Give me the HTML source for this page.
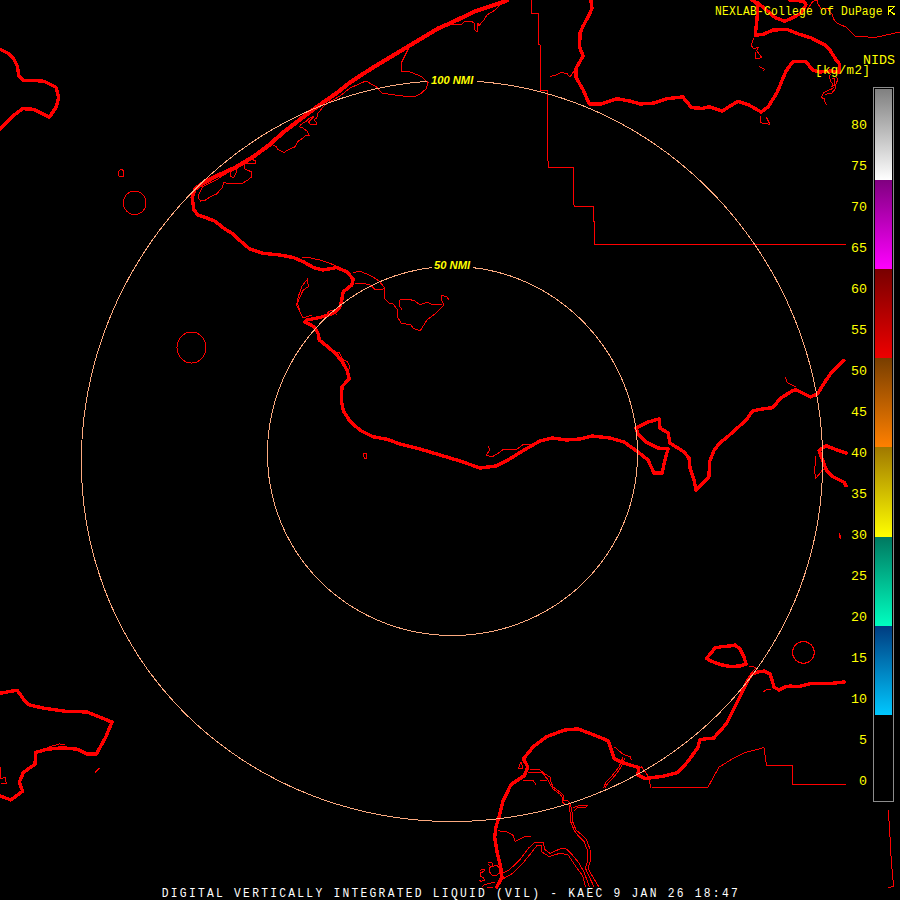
<!DOCTYPE html>
<html><head><meta charset="utf-8">
<style>
html,body{margin:0;padding:0;background:#000;width:900px;height:900px;overflow:hidden}
#c{position:absolute;left:0;top:0;width:900px;height:900px}
.t{position:absolute;font-family:"Liberation Mono",monospace;white-space:pre;line-height:1}
</style></head><body>
<svg id="c" shape-rendering="crispEdges" width="900" height="900" viewBox="0 0 900 900">
<rect width="900" height="900" fill="#000"/>
<g fill="none" stroke="#ff0000" stroke-width="1" stroke-linejoin="round">
<path d="M550,76.5 L556,75 561,72.5 567,73.5 570,77 574,71"/>
<path d="M531.5,0 V13.5 H538.5 V44 L540,45 V90.5 H547.5 V161 H548.5 V167.5 H573.5 V204 L574.5,206.5 H593.5 V221.5 H594.5 V244.5 H846"/>
<path d="M651.5,787.5 H707.8 L718.9,767.2 733,758.5 744.4,752.8 763.9,747.6 L766.5,765.5 H792.5 V784.5 H846"/>
<path d="M641.3,766.4 L647.4,775 649,780 651,787.5"/>
<path d="M505,0 L500,5 495,10 487,15 484,20 479,25.5 478,23 477,32 475,30 474,23 472,21.5 465,21 462,24 450,25 447,26 433.6,32 417.6,40.9 408.7,48 401.6,62.2 401.6,71.1 410.4,72 421.1,76.4 428.2,82.7 426,88.9 421,93.3 415.8,96 403.3,96 382,93.3 376.7,87.1 366,80.9 350,88 340,96 327.3,103.3 323.3,106.7 318,113.3 316.7,118 314,120 316.7,122.7 316,124.7 310.7,124.7 308.7,122 312.7,118 314,116.7 310.7,117.3 306,121.3 300.7,124.7 299.3,126.7 302.7,128 307.3,131.3 309.3,135.3 305.3,136 302,138.7 298,141.3 295.3,146.7 290.7,148.7 286.7,150.7 284,152.7 280.7,150.7 277.3,149.3 276.7,146.7 272.7,145.3"/>
<path d="M252.2,159.3 L255.8,161.1 255.8,163.3 248.7,163.3 244.2,164.2 245.1,169.1 251.3,171.8 251.3,177.1 246.9,180.7 242.4,183.3 232.7,183.3 223.8,182.9 222,187.8 216.7,194 210.4,196.7 205.1,200.2 200.7,201.1 198.4,198.4 198.9,194 202.4,186.9 209.6,183.3 216.7,179.8 222,176.2 226,174"/>
<path d="M230.7,172 L230,176 233.3,178 236,173.3 236,168"/>
<path d="M301.7,257.5 L308.3,257.5 320,260 330,263.3 336,266"/>
<path d="M307.5,278.3 L308.3,286.7 303.3,290 300,296.7 297.5,303.3 300,311.7 303.3,318.3"/>
<path d="M306.7,280 L301.7,286.7 298.3,296.7 296.7,305 300,312 303.3,318 311.7,315"/>
<path d="M326.7,313.3 L331.7,310 336.7,315"/>
<path d="M353,273 L359,271 367,274 373,277 379,281 384,287 384,292 385,299 389,303 393,304 397,309 397,316 401,323 411,325 413,328 420,331 427,320 436,313 440,309 444,305 441,299 441,295 447,297 449,300"/>
<path d="M442,304 L433,305 427,302 420,305 415,301 408,299 400,300 399,305 402,310"/>
<path d="M355,284 L364,283.3 370.7,285.3 374.7,289.3 380,290 384,288.7"/>
<path d="M488,446 L490,450 486,455 492,457 500,452 504,449 516,450 524,444 530,444"/>
<path d="M335,353 L339.3,352.7 343.3,360 347.3,361.3 350,367.3 348,371"/>
<path d="M749,667 L753,666.5 756,668 752,672"/>
<path d="M763,692 L767,689.5 771,689"/>
<path d="M121.5,169.5 L123.5,170.5 V176.5 H119.5 L118.5,175 V172 L120,170 Z"/>
<path d="M364,453.5 H366.5 L367,458.5 H364.5 L363.5,455 Z"/>
<path d="M807.1,9.4 L813,1.2 817.7,0"/>
<path d="M817.7,0 L817.7,3.5 821.3,9.4 827.2,8.2 831.9,14.1 834.2,20 837.8,23.6 846,27.1 855,36 875,37.5 897.5,32.5 900,32"/>
<path d="M754,38 L751.2,44.8 753,48.3 755.3,48.3 758.8,47.1 756.5,50.6 761.8,57.7 755.3,58.9 755.3,51.8"/>
<path d="M759.3,66.7 L764.7,69.3 762.9,71.1"/>
<path d="M830.4,73.6 L829.6,76.7 830.4,81.1 832.2,83.3 833.1,87.8 831.3,89.1 826.9,90.9 823.3,93.1 822,95.8 821.6,97.6 824.7,98.9 825.1,102.4 826.4,104.7"/>
<path d="M836.7,76.7 L837.6,80.2 835.8,84.2 835.3,88.7 833.6,90.9 831.3,93.6 826.9,94 824.7,95.3"/>
<path d="M832.2,78.9 L834.9,78.9 834,85.6 831.5,87"/>
<path d="M839,532.5 V537 L840.5,538 L841,536 L839,535"/>
<path d="M761.1,115.6 L760.2,122.7 770,124.4 766.4,117.3"/>
<path d="M815.6,455.6 L814.7,471.6 815.6,478.7 822.7,469.8 826,470"/>
<path d="M785.3,377.3 L787.1,382.7 796,387.1"/>
<path d="M530,769 L540,770 545,774 550,777 551,782 553,787 560,792 563,795 563,800 567,800 570,803 571,807 572,812 572,820 574,825 576,830 580,833.3 586.7,840 590,849.3 590.7,860 588,868 590.7,873.3 598.7,886.7"/>
<path d="M528,773 L532,772 542,772 548,780 550,784 553,789 560,794 562,797 562,802 565,804 569,805 570,812 570,820 572,825 574,830"/>
<path d="M573,808 L580,805 588,805 586,807 578,807 574,811"/>
<path d="M523,781 L530,780 533,780 536,785"/>
<path d="M540,780 L547,780"/>
<path d="M521,762 L518,769 523,768 521,762"/>
<path d="M574,830 L577.3,834.7 584,841.3 587.3,850 588,860 585.3,868 588,874 594,886.7"/>
<path d="M614.4,746.9 L623,754.2 630.3,756.7 631.6,760.3"/>
<path d="M623,757 L619.3,766.4 615,772 610.8,777.4 606,782 603.4,788.4"/>
<path d="M625,758 L621,767 617,773 612,779 608,783 605,788"/>
<path d="M498,830.7 L507.3,832 512.7,834.7 515.3,841.3 520.7,838.7 526,836 531.3,836.7"/>
<path d="M502.7,873.3 L510,869.3 520.7,858.7 528.7,848 535.3,842 543.3,842.7 544.7,849.3 550,853.3 562,848 566.7,849.3 573.3,856 578.7,862.7 584,872 589.3,886.7"/>
<path d="M503.3,878.7 L512.7,873.3 523.3,862.7 532.7,851 537,845.5 541.5,846 542,852 549,856.5 560,853.3 568,854.7 576,866.7 582.7,876 585.5,886.7"/>
<path d="M488.5,863 L491,862.3 492.8,863.5 492,866 489.5,866 488.5,864.5"/>
<path d="M489,868 L492,866.5 497,865 499,868 499.5,873 496,875.5 492,875 489.5,872 489,868"/>
<path d="M480,870.5 L483,869 485,870 482.5,872 480,873 480.5,876 483.5,878 484.5,880 481,881.5 479,880"/>
<path d="M481.5,887.5 L484,885 487,884 494.5,882"/>
<path d="M487,887.5 H493"/>
<path d="M46.7,747.8 L59.1,743.9 65.3,744.7"/>
<path d="M0,766.4 L0.8,778.9 5.4,777.3 6.2,783.5 1,784"/>
<path d="M94.9,772.6 L99.5,768"/>
<path d="M888.3,810 L889.3,825.3 890.4,843.3 891.3,861.3 892.4,873.3 893.3,882.7 893.3,886.7 888,887.3"/>
<ellipse cx="134.7" cy="202.8" rx="11.3" ry="11.8"/>
<ellipse cx="191.5" cy="347.5" rx="14.5" ry="15.5"/>
<ellipse cx="803.4" cy="652.4" rx="10.9" ry="10.9"/>
</g>
<path d="M507,0.5 L474.4,11.7 450,23.3 438.9,28 416.7,41.3 394.4,54.6 372.2,68 350,82.4 337.8,92.2 310,111.8 282.2,133.2 270,144.4 252.2,157.5 234.4,168 216.7,176 203.3,183 195.3,188.7" fill="none" stroke="#ff0000" stroke-width="4.1" stroke-linejoin="round" stroke-linecap="round"/>
<g fill="none" stroke="#ff0000" stroke-width="3.4" stroke-linejoin="round" stroke-linecap="round">
<path d="M0,49.3 L8,53.3 13.3,58 17.3,66 18.7,75.3 23.3,80.7 33.3,80.4 44,81.3 56,87.3 58.7,98 56,107.3 49.3,117.3 33.3,109.3 22.7,108.7 14.7,114.7 6.7,122 0,129.3"/>
<path d="M195.3,188.7 192.2,197.6 193.8,209.8 198.2,215.1 206.2,217.8 215.1,221.3 224,228.4 232.9,233.8 238.3,239.2 250,249.2 263.3,253.3 280,255 293.3,257.5 303.3,261.7 313.3,267.5 323.3,270 336.7,267.5 346.7,271.7 353.3,279.2 351.7,285 343.3,291.7 341.7,300 340,306.7 333.3,313.3 320,317.5 306.7,320 305,322 314,326.7 318,333.3 319.3,340 326,345.3 335.3,353.3 342,361.3 347.3,370.7 349.3,378.7 342,386.7 341.3,400 343.3,410.7 350,421.3 360.7,430.7 372.7,436.7 387.3,439.3 400,444 420,449 440,455 460,461 480,468 496,466 508,460 524,450 540,441 552,438 566,440 580,439 592,436 610,438 624,442 638,452 648,460 654,473 662,473 666,456 668,449 658,448 646,442 638,434 636,428 648,422 659,419 660,428 668,433 670,443 684,452 689,458 690,468 694,480 696,490 708.9,476.9 709.8,460.9 714.2,450.2 719.6,443.1 728.4,436 737.3,428 746.2,420 752.4,411.1 760.4,409.3 772.9,407.6 780,398.7 792.4,390.7 796,389.8 810.2,396.9 817.3,394.2 824.4,382.7 831.6,372 844,360.4"/>
<path d="M846,452.9 L835.1,449.3 826.2,445.8 819.1,450.2 820.9,455.6 826.2,469.8 833.3,476.9 844,482.2 846,485.8"/>
<path d="M590.7,0 L592,8 589.3,14.7 582.7,26.7 580,33.3 579.6,47.1 583.1,56 576,68.4 576,77.3 583.1,89.8 589.3,104 600.9,104 616.9,98.7 631.1,101.3 640,104 654.2,103.1 666.7,98.7 682.7,96.9 691.6,107.6 702.2,108.4 709.3,106.7 722,111.1 738,101.3 748.7,104.9 761.1,112 768.2,106.7 777.1,92.4 786,71.1 793.1,61.3 805.6,61.3 812.7,70.2 819.8,72 830.4,71.1 839.3,72 839.3,64 835.4,58.9 829.5,49.5 824.8,44.8 810.7,37.7 798.9,34.2 787.1,29.4 773,30 763.6,34.2 755.3,35.3 756.5,23.6 757.7,11.8 757.1,3.5 751.8,0"/>
<path d="M757.1,2.4 L767.1,10.6 775.3,17.7 784.8,21.2 793,17.7 801.2,13 806,4.7 803.6,1.2 789.5,0"/>
<path d="M496.7,887 L502,877.3 500.7,866.7 497.3,853.3 494.7,837.3 496,826.7 499.3,816 503,801 511.1,784.4 524.4,775.6 527.8,766.7 523.3,758.9 533.3,746.7 546.7,736.7 564.4,730 577.8,728.9 590,733.4 608.3,740.8 612,751.8 614.4,759 626.7,764 638.9,767.6 637.7,775 645,778.6 663.3,776.2 678,772.5 687.8,761.5 697.6,748 700,739.5 713.8,738 726.2,724 738.7,699.1 748,680 752,674 758,672 764,671 770,674 772,680 774,687 779,690 785,687 790,686 797.8,686.7 810.2,683.6 828.9,683.6 844.5,682"/>
<path d="M706.5,658.5 L715,648 722,646.5 730,646 735,645 740,649 744,657 746,664 740,666 730,666.5 720,664.5 711,661 Z"/>
<path d="M0,693.3 L7.8,691.8 17.1,690.2 24.9,701.1 29.5,705 43.5,708.1 65.3,711.2 87.1,712 112,722.1 105.8,736.9 96.4,754 87.1,754 77.8,749.3 62.2,747.8 46.7,749.3 35.8,752.4 35,764.1 23.3,772.6 19.4,782 22.6,791.3 10.9,799.9 0,796"/>
</g>
<g fill="none" stroke="#fcaa80" stroke-width="1"><path d="M473.1,267.7 L474.7,267.9 L476.3,268.1 L477.9,268.3 L479.4,268.5 L481.0,268.8 L482.6,269.0 L484.2,269.3 L485.7,269.6 L487.3,269.9 L488.8,270.2 L490.4,270.5 L492.0,270.9 L493.5,271.2 L495.1,271.6 L496.6,272.0 L498.1,272.4 L499.7,272.8 L501.2,273.2 L502.8,273.6 L504.3,274.1 L505.8,274.6 L507.3,275.0 L508.9,275.5 L510.4,276.0 L511.9,276.6 L513.4,277.1 L514.9,277.6 L516.4,278.2 L517.9,278.8 L519.4,279.3 L520.8,279.9 L522.3,280.5 L523.8,281.2 L525.3,281.8 L526.7,282.5 L528.2,283.1 L529.6,283.8 L531.1,284.5 L532.5,285.2 L533.9,285.9 L535.4,286.6 L536.8,287.3 L538.2,288.1 L539.6,288.9 L541.0,289.6 L542.4,290.4 L543.8,291.2 L545.2,292.0 L546.6,292.9 L547.9,293.7 L549.3,294.5 L550.6,295.4 L552.0,296.3 L553.3,297.1 L554.7,298.0 L556.0,298.9 L557.3,299.9 L558.6,300.8 L559.9,301.7 L561.2,302.7 L562.5,303.7 L563.8,304.6 L565.1,305.6 L566.3,306.6 L567.6,307.6 L568.8,308.6 L570.0,309.7 L571.3,310.7 L572.5,311.8 L573.7,312.8 L574.9,313.9 L576.1,315.0 L577.3,316.1 L578.5,317.2 L579.6,318.3 L580.8,319.4 L581.9,320.5 L583.1,321.7 L584.2,322.8 L585.3,324.0 L586.4,325.2 L587.5,326.4 L588.6,327.5 L589.7,328.7 L590.7,330.0 L591.8,331.2 L592.9,332.4 L593.9,333.6 L594.9,334.9 L595.9,336.1 L596.9,337.4 L597.9,338.7 L598.9,340.0 L599.9,341.3 L600.8,342.6 L601.8,343.9 L602.7,345.2 L603.7,346.5 L604.6,347.8 L605.5,349.2 L606.4,350.5 L607.3,351.9 L608.1,353.2 L609.0,354.6 L609.9,356.0 L610.7,357.4 L611.5,358.8 L612.3,360.1 L613.1,361.6 L613.9,363.0 L614.7,364.4 L615.5,365.8 L616.2,367.2 L617.0,368.7 L617.7,370.1 L618.4,371.6 L619.1,373.0 L619.8,374.5 L620.5,376.0 L621.1,377.4 L621.8,378.9 L622.4,380.4 L623.1,381.9 L623.7,383.4 L624.3,384.9 L624.9,386.4 L625.5,387.9 L626.0,389.4 L626.6,390.9 L627.1,392.5 L627.6,394.0 L628.1,395.5 L628.6,397.1 L629.1,398.6 L629.6,400.1 L630.1,401.7 L630.5,403.2 L630.9,404.8 L631.4,406.4 L631.8,407.9 L632.2,409.5 L632.5,411.1 L632.9,412.6 L633.2,414.2 L633.6,415.8 L633.9,417.4 L634.2,419.0 L634.5,420.5 L634.8,422.1 L635.1,423.7 L635.3,425.3 L635.6,426.9 L635.8,428.5 L636.0,430.1 L636.2,431.7 L636.4,433.3 L636.6,434.9 L636.7,436.5 L636.9,438.1 L637.0,439.7 L637.1,441.3 L637.2,443.0 L637.3,444.6 L637.4,446.2 L637.4,447.8 L637.5,449.4 L637.5,451.0 L637.5,452.6 L637.5,454.2 L637.5,455.8 L637.5,457.4 L637.4,459.0 L637.4,460.7 L637.3,462.3 L637.2,463.9 L637.1,465.5 L637.0,467.1 L636.9,468.7 L636.8,470.3 L636.6,471.9 L636.5,473.5 L636.3,475.1 L636.1,476.7 L635.9,478.3 L635.7,479.9 L635.4,481.5 L635.2,483.0 L634.9,484.6 L634.6,486.2 L634.3,487.8 L634.0,489.4 L633.7,490.9 L633.4,492.5 L633.0,494.1 L632.7,495.6 L632.3,497.2 L631.9,498.8 L631.5,500.3 L631.1,501.9 L630.6,503.4 L630.2,504.9 L629.7,506.5 L629.3,508.0 L628.8,509.5 L628.3,511.1 L627.8,512.6 L627.2,514.1 L626.7,515.6 L626.1,517.1 L625.6,518.6 L625.0,520.1 L624.4,521.6 L623.8,523.1 L623.2,524.6 L622.5,526.0 L621.9,527.5 L621.2,529.0 L620.6,530.4 L619.9,531.9 L619.2,533.3 L618.5,534.8 L617.7,536.2 L617.0,537.6 L616.2,539.0 L615.5,540.4 L614.7,541.9 L613.9,543.2 L613.1,544.6 L612.3,546.0 L611.5,547.4 L610.6,548.8 L609.8,550.1 L608.9,551.5 L608.0,552.8 L607.2,554.2 L606.3,555.5 L605.3,556.8 L604.4,558.1 L603.5,559.4 L602.5,560.7 L601.6,562.0 L600.6,563.3 L599.6,564.6 L598.6,565.9 L597.6,567.1 L596.6,568.4 L595.6,569.6 L594.5,570.8 L593.5,572.0 L592.4,573.3 L591.4,574.5 L590.3,575.6 L589.2,576.8 L588.1,578.0 L587.0,579.2 L585.8,580.3 L584.7,581.5 L583.6,582.6 L582.4,583.7 L581.2,584.8 L580.1,585.9 L578.9,587.0 L577.7,588.1 L576.5,589.2 L575.2,590.2 L574.0,591.3 L572.8,592.3 L571.5,593.4 L570.3,594.4 L569.0,595.4 L567.7,596.4 L566.5,597.4 L565.2,598.3 L563.9,599.3 L562.6,600.3 L561.2,601.2 L559.9,602.1 L558.6,603.1 L557.2,604.0 L555.9,604.9 L554.5,605.7 L553.2,606.6 L551.8,607.5 L550.4,608.3 L549.0,609.1 L547.6,610.0 L546.2,610.8 L544.8,611.6 L543.4,612.4 L541.9,613.1 L540.5,613.9 L539.1,614.7 L537.6,615.4 L536.2,616.1 L534.7,616.8 L533.2,617.5 L531.7,618.2 L530.3,618.9 L528.8,619.5 L527.3,620.2 L525.8,620.8 L524.3,621.5 L522.8,622.1 L521.2,622.7 L519.7,623.2 L518.2,623.8 L516.7,624.4 L515.1,624.9 L513.6,625.4 L512.0,626.0 L510.5,626.5 L508.9,627.0 L507.4,627.4 L505.8,627.9 L504.2,628.4 L502.7,628.8 L501.1,629.2 L499.5,629.6 L497.9,630.0 L496.3,630.4 L494.7,630.8 L493.1,631.1 L491.5,631.5 L489.9,631.8 L488.3,632.1 L486.7,632.4 L485.1,632.7 L483.5,633.0 L481.9,633.2 L480.3,633.5 L478.6,633.7 L477.0,633.9 L475.4,634.1 L473.8,634.3 L472.1,634.5 L470.5,634.7 L468.9,634.8 L467.2,634.9 L465.6,635.1 L464.0,635.2 L462.3,635.2 L460.7,635.3 L459.1,635.4 L457.4,635.4 L455.8,635.5 L454.1,635.5 L452.5,635.5 L450.9,635.5 L449.2,635.5 L447.6,635.4 L445.9,635.4 L444.3,635.3 L442.7,635.2 L441.0,635.2 L439.4,635.1 L437.8,634.9 L436.1,634.8 L434.5,634.7 L432.9,634.5 L431.2,634.3 L429.6,634.1 L428.0,633.9 L426.4,633.7 L424.7,633.5 L423.1,633.2 L421.5,633.0 L419.9,632.7 L418.3,632.4 L416.7,632.1 L415.1,631.8 L413.5,631.5 L411.9,631.1 L410.3,630.8 L408.7,630.4 L407.1,630.0 L405.5,629.6 L403.9,629.2 L402.3,628.8 L400.8,628.4 L399.2,627.9 L397.6,627.4 L396.1,627.0 L394.5,626.5 L393.0,626.0 L391.4,625.4 L389.9,624.9 L388.3,624.4 L386.8,623.8 L385.3,623.2 L383.8,622.7 L382.2,622.1 L380.7,621.5 L379.2,620.8 L377.7,620.2 L376.2,619.5 L374.7,618.9 L373.3,618.2 L371.8,617.5 L370.3,616.8 L368.8,616.1 L367.4,615.4 L365.9,614.7 L364.5,613.9 L363.1,613.1 L361.6,612.4 L360.2,611.6 L358.8,610.8 L357.4,610.0 L356.0,609.1 L354.6,608.3 L353.2,607.5 L351.8,606.6 L350.5,605.7 L349.1,604.9 L347.8,604.0 L346.4,603.1 L345.1,602.1 L343.8,601.2 L342.4,600.3 L341.1,599.3 L339.8,598.3 L338.5,597.4 L337.3,596.4 L336.0,595.4 L334.7,594.4 L333.5,593.4 L332.2,592.3 L331.0,591.3 L329.8,590.2 L328.5,589.2 L327.3,588.1 L326.1,587.0 L324.9,585.9 L323.8,584.8 L322.6,583.7 L321.4,582.6 L320.3,581.5 L319.2,580.3 L318.0,579.2 L316.9,578.0 L315.8,576.8 L314.7,575.6 L313.6,574.5 L312.6,573.3 L311.5,572.0 L310.5,570.8 L309.4,569.6 L308.4,568.4 L307.4,567.1 L306.4,565.9 L305.4,564.6 L304.4,563.3 L303.4,562.0 L302.5,560.7 L301.5,559.4 L300.6,558.1 L299.7,556.8 L298.7,555.5 L297.8,554.2 L297.0,552.8 L296.1,551.5 L295.2,550.1 L294.4,548.8 L293.5,547.4 L292.7,546.0 L291.9,544.6 L291.1,543.3 L290.3,541.9 L289.5,540.4 L288.8,539.0 L288.0,537.6 L287.3,536.2 L286.5,534.8 L285.8,533.3 L285.1,531.9 L284.4,530.4 L283.8,529.0 L283.1,527.5 L282.5,526.0 L281.8,524.6 L281.2,523.1 L280.6,521.6 L280.0,520.1 L279.4,518.6 L278.9,517.1 L278.3,515.6 L277.8,514.1 L277.2,512.6 L276.7,511.1 L276.2,509.5 L275.7,508.0 L275.3,506.5 L274.8,504.9 L274.4,503.4 L273.9,501.9 L273.5,500.3 L273.1,498.8 L272.7,497.2 L272.3,495.6 L272.0,494.1 L271.6,492.5 L271.3,490.9 L271.0,489.4 L270.7,487.8 L270.4,486.2 L270.1,484.6 L269.8,483.0 L269.6,481.5 L269.3,479.9 L269.1,478.3 L268.9,476.7 L268.7,475.1 L268.5,473.5 L268.4,471.9 L268.2,470.3 L268.1,468.7 L268.0,467.1 L267.9,465.5 L267.8,463.9 L267.7,462.3 L267.6,460.7 L267.6,459.0 L267.5,457.4 L267.5,455.8 L267.5,454.2 L267.5,452.6 L267.5,451.0 L267.5,449.4 L267.6,447.8 L267.6,446.2 L267.7,444.6 L267.8,443.0 L267.9,441.3 L268.0,439.7 L268.1,438.1 L268.3,436.5 L268.4,434.9 L268.6,433.3 L268.8,431.7 L269.0,430.1 L269.2,428.5 L269.4,426.9 L269.7,425.3 L269.9,423.7 L270.2,422.1 L270.5,420.5 L270.8,419.0 L271.1,417.4 L271.4,415.8 L271.8,414.2 L272.1,412.6 L272.5,411.1 L272.8,409.5 L273.2,407.9 L273.6,406.4 L274.1,404.8 L274.5,403.2 L274.9,401.7 L275.4,400.1 L275.9,398.6 L276.4,397.1 L276.9,395.5 L277.4,394.0 L277.9,392.5 L278.4,390.9 L279.0,389.4 L279.5,387.9 L280.1,386.4 L280.7,384.9 L281.3,383.4 L281.9,381.9 L282.6,380.4 L283.2,378.9 L283.9,377.4 L284.5,376.0 L285.2,374.5 L285.9,373.0 L286.6,371.6 L287.3,370.1 L288.0,368.7 L288.8,367.2 L289.5,365.8 L290.3,364.4 L291.1,363.0 L291.9,361.6 L292.7,360.1 L293.5,358.8 L294.3,357.4 L295.1,356.0 L296.0,354.6 L296.9,353.2 L297.7,351.9 L298.6,350.5 L299.5,349.2 L300.4,347.8 L301.3,346.5 L302.3,345.2 L303.2,343.9 L304.2,342.6 L305.1,341.3 L306.1,340.0 L307.1,338.7 L308.1,337.4 L309.1,336.1 L310.1,334.9 L311.1,333.6 L312.1,332.4 L313.2,331.2 L314.3,330.0 L315.3,328.7 L316.4,327.5 L317.5,326.4 L318.6,325.2 L319.7,324.0 L320.8,322.8 L321.9,321.7 L323.1,320.5 L324.2,319.4 L325.4,318.3 L326.5,317.2 L327.7,316.1 L328.9,315.0 L330.1,313.9 L331.3,312.8 L332.5,311.8 L333.7,310.7 L335.0,309.7 L336.2,308.6 L337.4,307.6 L338.7,306.6 L339.9,305.6 L341.2,304.6 L342.5,303.7 L343.8,302.7 L345.1,301.7 L346.4,300.8 L347.7,299.9 L349.0,298.9 L350.3,298.0 L351.7,297.1 L353.0,296.3 L354.4,295.4 L355.7,294.5 L357.1,293.7 L358.4,292.9 L359.8,292.0 L361.2,291.2 L362.6,290.4 L364.0,289.6 L365.4,288.9 L366.8,288.1 L368.2,287.3 L369.6,286.6 L371.1,285.9 L372.5,285.2 L373.9,284.5 L375.4,283.8 L376.8,283.1 L378.3,282.5 L379.7,281.8 L381.2,281.2 L382.7,280.5 L384.2,279.9 L385.6,279.3 L387.1,278.8 L388.6,278.2 L390.1,277.6 L391.6,277.1 L393.1,276.6 L394.6,276.0 L396.1,275.5 L397.7,275.0 L399.2,274.6 L400.7,274.1 L402.2,273.6 L403.8,273.2 L405.3,272.8 L406.9,272.4 L408.4,272.0 L409.9,271.6 L411.5,271.2 L413.0,270.9 L414.6,270.5 L416.2,270.2 L417.7,269.9 L419.3,269.6 L420.8,269.3 L422.4,269.0 L424.0,268.8 L425.6,268.5 L427.1,268.3 L428.7,268.1 L430.3,267.9 L431.9,267.7"/><path d="M477.1,81.4 L478.7,81.5 L480.2,81.6 L481.8,81.8 L483.4,81.9 L484.9,82.1 L486.5,82.2 L488.0,82.4 L489.6,82.5 L491.2,82.7 L492.7,82.9 L494.3,83.1 L495.9,83.3 L497.4,83.5 L499.0,83.7 L500.5,83.9 L502.1,84.1 L503.6,84.3 L505.2,84.6 L506.7,84.8 L508.3,85.1 L509.9,85.3 L511.4,85.6 L513.0,85.9 L514.5,86.1 L516.0,86.4 L517.6,86.7 L519.1,87.0 L520.7,87.3 L522.2,87.6 L523.8,87.9 L525.3,88.3 L526.8,88.6 L528.4,88.9 L529.9,89.3 L531.5,89.6 L533.0,90.0 L534.5,90.4 L536.1,90.7 L537.6,91.1 L539.1,91.5 L540.6,91.9 L542.2,92.3 L543.7,92.7 L545.2,93.1 L546.7,93.5 L548.2,94.0 L549.8,94.4 L551.3,94.9 L552.8,95.3 L554.3,95.8 L555.8,96.2 L557.3,96.7 L558.8,97.2 L560.3,97.6 L561.8,98.1 L563.3,98.6 L564.8,99.1 L566.3,99.6 L567.8,100.2 L569.3,100.7 L570.8,101.2 L572.3,101.8 L573.8,102.3 L575.3,102.8 L576.7,103.4 L578.2,104.0 L579.7,104.5 L581.2,105.1 L582.7,105.7 L584.1,106.3 L585.6,106.9 L587.1,107.5 L588.5,108.1 L590.0,108.7 L591.4,109.3 L592.9,110.0 L594.4,110.6 L595.8,111.2 L597.3,111.9 L598.7,112.5 L600.1,113.2 L601.6,113.9 L603.0,114.5 L604.5,115.2 L605.9,115.9 L607.3,116.6 L608.8,117.3 L610.2,118.0 L611.6,118.7 L613.0,119.4 L614.4,120.2 L615.9,120.9 L617.3,121.6 L618.7,122.4 L620.1,123.1 L621.5,123.9 L622.9,124.6 L624.3,125.4 L625.7,126.2 L627.1,127.0 L628.5,127.7 L629.8,128.5 L631.2,129.3 L632.6,130.1 L634.0,130.9 L635.3,131.8 L636.7,132.6 L638.1,133.4 L639.4,134.3 L640.8,135.1 L642.2,135.9 L643.5,136.8 L644.9,137.7 L646.2,138.5 L647.5,139.4 L648.9,140.3 L650.2,141.2 L651.5,142.0 L652.9,142.9 L654.2,143.8 L655.5,144.7 L656.8,145.7 L658.2,146.6 L659.5,147.5 L660.8,148.4 L662.1,149.4 L663.4,150.3 L664.7,151.3 L666.0,152.2 L667.2,153.2 L668.5,154.1 L669.8,155.1 L671.1,156.1 L672.4,157.1 L673.6,158.0 L674.9,159.0 L676.2,160.0 L677.4,161.0 L678.7,162.1 L679.9,163.1 L681.2,164.1 L682.4,165.1 L683.6,166.1 L684.9,167.2 L686.1,168.2 L687.3,169.3 L688.5,170.3 L689.7,171.4 L691.0,172.4 L692.2,173.5 L693.4,174.6 L694.6,175.7 L695.8,176.7 L697.0,177.8 L698.1,178.9 L699.3,180.0 L700.5,181.1 L701.7,182.2 L702.8,183.4 L704.0,184.5 L705.2,185.6 L706.3,186.7 L707.5,187.9 L708.6,189.0 L709.8,190.2 L710.9,191.3 L712.0,192.5 L713.1,193.6 L714.3,194.8 L715.4,196.0 L716.5,197.1 L717.6,198.3 L718.7,199.5 L719.8,200.7 L720.9,201.9 L722.0,203.1 L723.1,204.3 L724.2,205.5 L725.2,206.7 L726.3,207.9 L727.4,209.2 L728.4,210.4 L729.5,211.6 L730.5,212.8 L731.6,214.1 L732.6,215.3 L733.6,216.6 L734.7,217.8 L735.7,219.1 L736.7,220.4 L737.7,221.6 L738.7,222.9 L739.7,224.2 L740.7,225.5 L741.7,226.7 L742.7,228.0 L743.7,229.3 L744.7,230.6 L745.7,231.9 L746.6,233.2 L747.6,234.5 L748.6,235.8 L749.5,237.2 L750.4,238.5 L751.4,239.8 L752.3,241.1 L753.3,242.5 L754.2,243.8 L755.1,245.2 L756.0,246.5 L756.9,247.9 L757.8,249.2 L758.7,250.6 L759.6,251.9 L760.5,253.3 L761.4,254.7 L762.2,256.0 L763.1,257.4 L764.0,258.8 L764.8,260.2 L765.7,261.6 L766.5,263.0 L767.4,264.4 L768.2,265.8 L769.0,267.2 L769.9,268.6 L770.7,270.0 L771.5,271.4 L772.3,272.8 L773.1,274.2 L773.9,275.6 L774.7,277.1 L775.5,278.5 L776.2,279.9 L777.0,281.4 L777.8,282.8 L778.5,284.2 L779.3,285.7 L780.0,287.1 L780.8,288.6 L781.5,290.0 L782.2,291.5 L783.0,293.0 L783.7,294.4 L784.4,295.9 L785.1,297.4 L785.8,298.8 L786.5,300.3 L787.2,301.8 L787.8,303.3 L788.5,304.7 L789.2,306.2 L789.8,307.7 L790.5,309.2 L791.1,310.7 L791.8,312.2 L792.4,313.7 L793.1,315.2 L793.7,316.7 L794.3,318.2 L794.9,319.7 L795.5,321.2 L796.1,322.8 L796.7,324.3 L797.3,325.8 L797.9,327.3 L798.4,328.8 L799.0,330.4 L799.6,331.9 L800.1,333.4 L800.7,335.0 L801.2,336.5 L801.7,338.0 L802.3,339.6 L802.8,341.1 L803.3,342.7 L803.8,344.2 L804.3,345.8 L804.8,347.3 L805.3,348.9 L805.8,350.4 L806.3,352.0 L806.7,353.5 L807.2,355.1 L807.6,356.7 L808.1,358.2 L808.5,359.8 L809.0,361.4 L809.4,362.9 L809.8,364.5 L810.2,366.1 L810.6,367.7 L811.1,369.2 L811.4,370.8 L811.8,372.4 L812.2,374.0 L812.6,375.6 L813.0,377.1 L813.3,378.7 L813.7,380.3 L814.0,381.9 L814.4,383.5 L814.7,385.1 L815.0,386.7 L815.4,388.3 L815.7,389.8 L816.0,391.4 L816.3,393.0 L816.6,394.6 L816.9,396.2 L817.1,397.8 L817.4,399.4 L817.7,401.0 L817.9,402.6 L818.2,404.2 L818.4,405.8 L818.7,407.5 L818.9,409.1 L819.1,410.7 L819.4,412.3 L819.6,413.9 L819.8,415.5 L820.0,417.1 L820.2,418.7 L820.3,420.3 L820.5,421.9 L820.7,423.5 L820.8,425.2 L821.0,426.8 L821.2,428.4 L821.3,430.0 L821.4,431.6 L821.6,433.2 L821.7,434.8 L821.8,436.5 L821.9,438.1 L822.0,439.7 L822.1,441.3 L822.2,442.9 L822.3,444.5 L822.3,446.2 L822.4,447.8 L822.4,449.4 L822.5,451.0 L822.5,452.6 L822.6,454.2 L822.6,455.8 L822.6,457.5 L822.6,459.1 L822.7,460.7 L822.7,462.3 L822.6,463.9 L822.6,465.5 L822.6,467.2 L822.6,468.8 L822.6,470.4 L822.5,472.0 L822.5,473.6 L822.4,475.2 L822.3,476.8 L822.3,478.5 L822.2,480.1 L822.1,481.7 L822.0,483.3 L821.9,484.9 L821.8,486.5 L821.7,488.1 L821.6,489.7 L821.5,491.3 L821.3,492.9 L821.2,494.5 L821.0,496.2 L820.9,497.8 L820.7,499.4 L820.6,501.0 L820.4,502.6 L820.2,504.2 L820.0,505.8 L819.8,507.4 L819.6,509.0 L819.4,510.6 L819.2,512.2 L818.9,513.7 L818.7,515.3 L818.5,516.9 L818.2,518.5 L818.0,520.1 L817.7,521.7 L817.4,523.3 L817.2,524.9 L816.9,526.4 L816.6,528.0 L816.3,529.6 L816.0,531.2 L815.7,532.8 L815.4,534.3 L815.0,535.9 L814.7,537.5 L814.4,539.1 L814.0,540.6 L813.7,542.2 L813.3,543.8 L812.9,545.3 L812.6,546.9 L812.2,548.5 L811.8,550.0 L811.4,551.6 L811.0,553.1 L810.6,554.7 L810.2,556.2 L809.7,557.8 L809.3,559.3 L808.9,560.9 L808.4,562.4 L808.0,564.0 L807.5,565.5 L807.1,567.0 L806.6,568.6 L806.1,570.1 L805.6,571.6 L805.1,573.2 L804.6,574.7 L804.1,576.2 L803.6,577.7 L803.1,579.2 L802.6,580.8 L802.0,582.3 L801.5,583.8 L800.9,585.3 L800.4,586.8 L799.8,588.3 L799.3,589.8 L798.7,591.3 L798.1,592.8 L797.5,594.3 L796.9,595.8 L796.3,597.3 L795.7,598.7 L795.1,600.2 L794.5,601.7 L793.8,603.2 L793.2,604.6 L792.6,606.1 L791.9,607.6 L791.2,609.0 L790.6,610.5 L789.9,612.0 L789.2,613.4 L788.6,614.9 L787.9,616.3 L787.2,617.8 L786.5,619.2 L785.8,620.6 L785.0,622.1 L784.3,623.5 L783.6,624.9 L782.8,626.4 L782.1,627.8 L781.4,629.2 L780.6,630.6 L779.8,632.0 L779.1,633.4 L778.3,634.8 L777.5,636.2 L776.7,637.6 L775.9,639.0 L775.1,640.4 L774.3,641.8 L773.5,643.2 L772.7,644.6 L771.9,646.0 L771.0,647.3 L770.2,648.7 L769.3,650.1 L768.5,651.4 L767.6,652.8 L766.8,654.1 L765.9,655.5 L765.0,656.8 L764.1,658.2 L763.2,659.5 L762.4,660.9 L761.5,662.2 L760.5,663.5 L759.6,664.8 L758.7,666.2 L757.8,667.5 L756.9,668.8 L755.9,670.1 L755.0,671.4 L754.0,672.7 L753.1,674.0 L752.1,675.3 L751.1,676.5 L750.2,677.8 L749.2,679.1 L748.2,680.4 L747.2,681.6 L746.2,682.9 L745.2,684.2 L744.2,685.4 L743.2,686.7 L742.1,687.9 L741.1,689.2 L740.1,690.4 L739.0,691.6 L738.0,692.8 L736.9,694.1 L735.9,695.3 L734.8,696.5 L733.8,697.7 L732.7,698.9 L731.6,700.1 L730.5,701.3 L729.4,702.5 L728.3,703.7 L727.2,704.9 L726.1,706.0 L725.0,707.2 L723.9,708.4 L722.8,709.5 L721.6,710.7 L720.5,711.8 L719.4,713.0 L718.2,714.1 L717.1,715.3 L715.9,716.4 L714.7,717.5 L713.6,718.6 L712.4,719.8 L711.2,720.9 L710.0,722.0 L708.9,723.1 L707.7,724.2 L706.5,725.3 L705.3,726.3 L704.0,727.4 L702.8,728.5 L701.6,729.6 L700.4,730.6 L699.2,731.7 L697.9,732.7 L696.7,733.8 L695.4,734.8 L694.2,735.9 L692.9,736.9 L691.7,737.9 L690.4,738.9 L689.1,739.9 L687.9,741.0 L686.6,742.0 L685.3,743.0 L684.0,744.0 L682.7,744.9 L681.4,745.9 L680.1,746.9 L678.8,747.9 L677.5,748.8 L676.2,749.8 L674.9,750.7 L673.6,751.7 L672.2,752.6 L670.9,753.6 L669.6,754.5 L668.2,755.4 L666.9,756.3 L665.5,757.3 L664.2,758.2 L662.8,759.1 L661.4,760.0 L660.1,760.8 L658.7,761.7 L657.3,762.6 L655.9,763.5 L654.6,764.3 L653.2,765.2 L651.8,766.1 L650.4,766.9 L649.0,767.7 L647.6,768.6 L646.2,769.4 L644.7,770.2 L643.3,771.1 L641.9,771.9 L640.5,772.7 L639.0,773.5 L637.6,774.3 L636.2,775.0 L634.7,775.8 L633.3,776.6 L631.8,777.4 L630.4,778.1 L628.9,778.9 L627.5,779.6 L626.0,780.4 L624.5,781.1 L623.1,781.8 L621.6,782.6 L620.1,783.3 L618.6,784.0 L617.2,784.7 L615.7,785.4 L614.2,786.1 L612.7,786.8 L611.2,787.5 L609.7,788.1 L608.2,788.8 L606.7,789.5 L605.2,790.1 L603.7,790.8 L602.1,791.4 L600.6,792.0 L599.1,792.7 L597.6,793.3 L596.1,793.9 L594.5,794.5 L593.0,795.1 L591.5,795.7 L589.9,796.3 L588.4,796.9 L586.8,797.5 L585.3,798.0 L583.7,798.6 L582.2,799.2 L580.6,799.7 L579.1,800.2 L577.5,800.8 L575.9,801.3 L574.4,801.8 L572.8,802.4 L571.2,802.9 L569.6,803.4 L568.1,803.9 L566.5,804.4 L564.9,804.8 L563.3,805.3 L561.7,805.8 L560.2,806.2 L558.6,806.7 L557.0,807.1 L555.4,807.6 L553.8,808.0 L552.2,808.5 L550.6,808.9 L549.0,809.3 L547.4,809.7 L545.8,810.1 L544.2,810.5 L542.5,810.9 L540.9,811.3 L539.3,811.6 L537.7,812.0 L536.1,812.4 L534.5,812.7 L532.8,813.1 L531.2,813.4 L529.6,813.7 L528.0,814.1 L526.3,814.4 L524.7,814.7 L523.1,815.0 L521.4,815.3 L519.8,815.6 L518.2,815.9 L516.5,816.1 L514.9,816.4 L513.3,816.7 L511.6,816.9 L510.0,817.2 L508.3,817.4 L506.7,817.7 L505.0,817.9 L503.4,818.1 L501.8,818.3 L500.1,818.5 L498.5,818.7 L496.8,818.9 L495.2,819.1 L493.5,819.3 L491.8,819.5 L490.2,819.6 L488.5,819.8 L486.9,819.9 L485.2,820.1 L483.6,820.2 L481.9,820.4 L480.3,820.5 L478.6,820.6 L476.9,820.7 L475.3,820.8 L473.6,820.9 L472.0,821.0 L470.3,821.1 L468.6,821.1 L467.0,821.2 L465.3,821.3 L463.6,821.3 L462.0,821.4 L460.3,821.4 L458.7,821.4 L457.0,821.5 L455.3,821.5 L453.7,821.5 L452.0,821.5 L450.3,821.5 L448.7,821.5 L447.0,821.5 L445.3,821.4 L443.7,821.4 L442.0,821.4 L440.4,821.3 L438.7,821.3 L437.0,821.2 L435.4,821.1 L433.7,821.1 L432.0,821.0 L430.4,820.9 L428.7,820.8 L427.1,820.7 L425.4,820.6 L423.7,820.5 L422.1,820.4 L420.4,820.2 L418.8,820.1 L417.1,819.9 L415.5,819.8 L413.8,819.6 L412.2,819.5 L410.5,819.3 L408.8,819.1 L407.2,818.9 L405.5,818.7 L403.9,818.5 L402.2,818.3 L400.6,818.1 L399.0,817.9 L397.3,817.7 L395.7,817.4 L394.0,817.2 L392.4,816.9 L390.7,816.7 L389.1,816.4 L387.5,816.1 L385.8,815.9 L384.2,815.6 L382.6,815.3 L380.9,815.0 L379.3,814.7 L377.7,814.4 L376.0,814.1 L374.4,813.7 L372.8,813.4 L371.2,813.1 L369.5,812.7 L367.9,812.4 L366.3,812.0 L364.7,811.6 L363.1,811.3 L361.5,810.9 L359.8,810.5 L358.2,810.1 L356.6,809.7 L355.0,809.3 L353.4,808.9 L351.8,808.5 L350.2,808.0 L348.6,807.6 L347.0,807.1 L345.4,806.7 L343.8,806.2 L342.3,805.8 L340.7,805.3 L339.1,804.8 L337.5,804.4 L335.9,803.9 L334.4,803.4 L332.8,802.9 L331.2,802.4 L329.6,801.8 L328.1,801.3 L326.5,800.8 L324.9,800.2 L323.4,799.7 L321.8,799.2 L320.3,798.6 L318.7,798.0 L317.2,797.5 L315.6,796.9 L314.1,796.3 L312.5,795.7 L311.0,795.1 L309.5,794.5 L307.9,793.9 L306.4,793.3 L304.9,792.7 L303.4,792.0 L301.9,791.4 L300.3,790.8 L298.8,790.1 L297.3,789.5 L295.8,788.8 L294.3,788.1 L292.8,787.5 L291.3,786.8 L289.8,786.1 L288.3,785.4 L286.8,784.7 L285.4,784.0 L283.9,783.3 L282.4,782.6 L280.9,781.8 L279.5,781.1 L278.0,780.4 L276.5,779.6 L275.1,778.9 L273.6,778.1 L272.2,777.4 L270.7,776.6 L269.3,775.8 L267.8,775.0 L266.4,774.3 L265.0,773.5 L263.5,772.7 L262.1,771.9 L260.7,771.1 L259.3,770.2 L257.8,769.4 L256.4,768.6 L255.0,767.7 L253.6,766.9 L252.2,766.1 L250.8,765.2 L249.4,764.3 L248.1,763.5 L246.7,762.6 L245.3,761.7 L243.9,760.8 L242.6,760.0 L241.2,759.1 L239.8,758.2 L238.5,757.3 L237.1,756.3 L235.8,755.4 L234.4,754.5 L233.1,753.6 L231.8,752.6 L230.4,751.7 L229.1,750.7 L227.8,749.8 L226.5,748.8 L225.2,747.9 L223.9,746.9 L222.6,745.9 L221.3,744.9 L220.0,744.0 L218.7,743.0 L217.4,742.0 L216.1,741.0 L214.9,739.9 L213.6,738.9 L212.3,737.9 L211.1,736.9 L209.8,735.9 L208.6,734.8 L207.3,733.8 L206.1,732.7 L204.8,731.7 L203.6,730.6 L202.4,729.6 L201.2,728.5 L200.0,727.4 L198.7,726.3 L197.5,725.3 L196.3,724.2 L195.1,723.1 L194.0,722.0 L192.8,720.9 L191.6,719.8 L190.4,718.6 L189.3,717.5 L188.1,716.4 L186.9,715.3 L185.8,714.1 L184.6,713.0 L183.5,711.8 L182.4,710.7 L181.2,709.5 L180.1,708.4 L179.0,707.2 L177.9,706.0 L176.8,704.9 L175.7,703.7 L174.6,702.5 L173.5,701.3 L172.4,700.1 L171.3,698.9 L170.2,697.7 L169.2,696.5 L168.1,695.3 L167.1,694.1 L166.0,692.8 L165.0,691.6 L163.9,690.4 L162.9,689.2 L161.9,687.9 L160.8,686.7 L159.8,685.4 L158.8,684.2 L157.8,682.9 L156.8,681.6 L155.8,680.4 L154.8,679.1 L153.8,677.8 L152.9,676.5 L151.9,675.3 L150.9,674.0 L150.0,672.7 L149.0,671.4 L148.1,670.1 L147.1,668.8 L146.2,667.5 L145.3,666.2 L144.4,664.8 L143.5,663.5 L142.5,662.2 L141.6,660.9 L140.8,659.5 L139.9,658.2 L139.0,656.8 L138.1,655.5 L137.2,654.1 L136.4,652.8 L135.5,651.4 L134.7,650.1 L133.8,648.7 L133.0,647.3 L132.1,646.0 L131.3,644.6 L130.5,643.2 L129.7,641.8 L128.9,640.4 L128.1,639.0 L127.3,637.6 L126.5,636.3 L125.7,634.8 L124.9,633.4 L124.2,632.0 L123.4,630.6 L122.6,629.2 L121.9,627.8 L121.2,626.4 L120.4,624.9 L119.7,623.5 L119.0,622.1 L118.2,620.6 L117.5,619.2 L116.8,617.8 L116.1,616.3 L115.4,614.9 L114.8,613.4 L114.1,612.0 L113.4,610.5 L112.8,609.0 L112.1,607.6 L111.4,606.1 L110.8,604.6 L110.2,603.2 L109.5,601.7 L108.9,600.2 L108.3,598.7 L107.7,597.3 L107.1,595.8 L106.5,594.3 L105.9,592.8 L105.3,591.3 L104.7,589.8 L104.2,588.3 L103.6,586.8 L103.1,585.3 L102.5,583.8 L102.0,582.3 L101.4,580.8 L100.9,579.2 L100.4,577.7 L99.9,576.2 L99.4,574.7 L98.9,573.2 L98.4,571.6 L97.9,570.1 L97.4,568.6 L96.9,567.0 L96.5,565.5 L96.0,564.0 L95.6,562.4 L95.1,560.9 L94.7,559.3 L94.3,557.8 L93.8,556.2 L93.4,554.7 L93.0,553.1 L92.6,551.6 L92.2,550.0 L91.8,548.5 L91.4,546.9 L91.1,545.3 L90.7,543.8 L90.3,542.2 L90.0,540.6 L89.6,539.1 L89.3,537.5 L89.0,535.9 L88.6,534.3 L88.3,532.8 L88.0,531.2 L87.7,529.6 L87.4,528.0 L87.1,526.4 L86.8,524.9 L86.6,523.3 L86.3,521.7 L86.0,520.1 L85.8,518.5 L85.5,516.9 L85.3,515.3 L85.1,513.7 L84.8,512.2 L84.6,510.6 L84.4,509.0 L84.2,507.4 L84.0,505.8 L83.8,504.2 L83.6,502.6 L83.4,501.0 L83.3,499.4 L83.1,497.8 L83.0,496.2 L82.8,494.5 L82.7,492.9 L82.5,491.3 L82.4,489.7 L82.3,488.1 L82.2,486.5 L82.1,484.9 L82.0,483.3 L81.9,481.7 L81.8,480.1 L81.7,478.5 L81.7,476.8 L81.6,475.2 L81.5,473.6 L81.5,472.0 L81.4,470.4 L81.4,468.8 L81.4,467.2 L81.4,465.5 L81.4,463.9 L81.3,462.3 L81.3,460.7 L81.4,459.1 L81.4,457.5 L81.4,455.8 L81.4,454.2 L81.5,452.6 L81.5,451.0 L81.6,449.4 L81.6,447.8 L81.7,446.2 L81.7,444.5 L81.8,442.9 L81.9,441.3 L82.0,439.7 L82.1,438.1 L82.2,436.5 L82.3,434.8 L82.4,433.2 L82.6,431.6 L82.7,430.0 L82.8,428.4 L83.0,426.8 L83.2,425.2 L83.3,423.5 L83.5,421.9 L83.7,420.3 L83.8,418.7 L84.0,417.1 L84.2,415.5 L84.4,413.9 L84.6,412.3 L84.9,410.7 L85.1,409.1 L85.3,407.5 L85.6,405.8 L85.8,404.2 L86.1,402.6 L86.3,401.0 L86.6,399.4 L86.9,397.8 L87.1,396.2 L87.4,394.6 L87.7,393.0 L88.0,391.4 L88.3,389.8 L88.6,388.3 L89.0,386.7 L89.3,385.1 L89.6,383.5 L90.0,381.9 L90.3,380.3 L90.7,378.7 L91.0,377.1 L91.4,375.6 L91.8,374.0 L92.2,372.4 L92.6,370.8 L92.9,369.2 L93.4,367.7 L93.8,366.1 L94.2,364.5 L94.6,362.9 L95.0,361.4 L95.5,359.8 L95.9,358.2 L96.4,356.7 L96.8,355.1 L97.3,353.5 L97.7,352.0 L98.2,350.4 L98.7,348.9 L99.2,347.3 L99.7,345.8 L100.2,344.2 L100.7,342.7 L101.2,341.1 L101.7,339.6 L102.3,338.0 L102.8,336.5 L103.3,335.0 L103.9,333.4 L104.4,331.9 L105.0,330.4 L105.6,328.8 L106.1,327.3 L106.7,325.8 L107.3,324.3 L107.9,322.8 L108.5,321.2 L109.1,319.7 L109.7,318.2 L110.3,316.7 L110.9,315.2 L111.6,313.7 L112.2,312.2 L112.9,310.7 L113.5,309.2 L114.2,307.7 L114.8,306.2 L115.5,304.7 L116.2,303.3 L116.8,301.8 L117.5,300.3 L118.2,298.8 L118.9,297.4 L119.6,295.9 L120.3,294.4 L121.0,293.0 L121.8,291.5 L122.5,290.0 L123.2,288.6 L124.0,287.1 L124.7,285.7 L125.5,284.2 L126.2,282.8 L127.0,281.4 L127.8,279.9 L128.5,278.5 L129.3,277.1 L130.1,275.6 L130.9,274.2 L131.7,272.8 L132.5,271.4 L133.3,270.0 L134.1,268.6 L135.0,267.2 L135.8,265.8 L136.6,264.4 L137.5,263.0 L138.3,261.6 L139.2,260.2 L140.0,258.8 L140.9,257.4 L141.8,256.0 L142.6,254.7 L143.5,253.3 L144.4,251.9 L145.3,250.6 L146.2,249.2 L147.1,247.9 L148.0,246.5 L148.9,245.2 L149.8,243.8 L150.7,242.5 L151.7,241.1 L152.6,239.8 L153.6,238.5 L154.5,237.2 L155.4,235.8 L156.4,234.5 L157.4,233.2 L158.3,231.9 L159.3,230.6 L160.3,229.3 L161.3,228.0 L162.3,226.7 L163.3,225.5 L164.3,224.2 L165.3,222.9 L166.3,221.6 L167.3,220.4 L168.3,219.1 L169.3,217.8 L170.4,216.6 L171.4,215.3 L172.4,214.1 L173.5,212.8 L174.5,211.6 L175.6,210.4 L176.6,209.2 L177.7,207.9 L178.8,206.7 L179.8,205.5 L180.9,204.3 L182.0,203.1 L183.1,201.9 L184.2,200.7 L185.3,199.5 L186.4,198.3 L187.5,197.1 L188.6,196.0 L189.7,194.8 L190.9,193.6 L192.0,192.5 L193.1,191.3 L194.2,190.2 L195.4,189.0 L196.5,187.9 L197.7,186.7 L198.8,185.6 L200.0,184.5 L201.2,183.4 L202.3,182.2 L203.5,181.1 L204.7,180.0 L205.9,178.9 L207.0,177.8 L208.2,176.7 L209.4,175.7 L210.6,174.6 L211.8,173.5 L213.0,172.4 L214.3,171.4 L215.5,170.3 L216.7,169.3 L217.9,168.2 L219.1,167.2 L220.4,166.1 L221.6,165.1 L222.8,164.1 L224.1,163.1 L225.3,162.1 L226.6,161.0 L227.8,160.0 L229.1,159.0 L230.4,158.0 L231.6,157.1 L232.9,156.1 L234.2,155.1 L235.5,154.1 L236.8,153.2 L238.0,152.2 L239.3,151.3 L240.6,150.3 L241.9,149.4 L243.2,148.4 L244.5,147.5 L245.8,146.6 L247.2,145.7 L248.5,144.7 L249.8,143.8 L251.1,142.9 L252.5,142.0 L253.8,141.2 L255.1,140.3 L256.5,139.4 L257.8,138.5 L259.1,137.7 L260.5,136.8 L261.8,135.9 L263.2,135.1 L264.6,134.3 L265.9,133.4 L267.3,132.6 L268.7,131.8 L270.0,130.9 L271.4,130.1 L272.8,129.3 L274.2,128.5 L275.5,127.7 L276.9,127.0 L278.3,126.2 L279.7,125.4 L281.1,124.6 L282.5,123.9 L283.9,123.1 L285.3,122.4 L286.7,121.6 L288.1,120.9 L289.6,120.2 L291.0,119.4 L292.4,118.7 L293.8,118.0 L295.2,117.3 L296.7,116.6 L298.1,115.9 L299.5,115.2 L301.0,114.5 L302.4,113.9 L303.9,113.2 L305.3,112.5 L306.7,111.9 L308.2,111.2 L309.6,110.6 L311.1,110.0 L312.6,109.3 L314.0,108.7 L315.5,108.1 L316.9,107.5 L318.4,106.9 L319.9,106.3 L321.3,105.7 L322.8,105.1 L324.3,104.5 L325.8,104.0 L327.3,103.4 L328.7,102.8 L330.2,102.3 L331.7,101.8 L333.2,101.2 L334.7,100.7 L336.2,100.2 L337.7,99.6 L339.2,99.1 L340.7,98.6 L342.2,98.1 L343.7,97.6 L345.2,97.2 L346.7,96.7 L348.2,96.2 L349.7,95.8 L351.2,95.3 L352.7,94.9 L354.2,94.4 L355.8,94.0 L357.3,93.5 L358.8,93.1 L360.3,92.7 L361.8,92.3 L363.4,91.9 L364.9,91.5 L366.4,91.1 L367.9,90.7 L369.5,90.4 L371.0,90.0 L372.5,89.6 L374.1,89.3 L375.6,88.9 L377.2,88.6 L378.7,88.3 L380.2,87.9 L381.8,87.6 L383.3,87.3 L384.9,87.0 L386.4,86.7 L388.0,86.4 L389.5,86.1 L391.0,85.9 L392.6,85.6 L394.1,85.3 L395.7,85.1 L397.3,84.8 L398.8,84.6 L400.4,84.3 L401.9,84.1 L403.5,83.9 L405.0,83.7 L406.6,83.5 L408.1,83.3 L409.7,83.1 L411.3,82.9 L412.8,82.7 L414.4,82.5 L416.0,82.4 L417.5,82.2 L419.1,82.1 L420.6,81.9 L422.2,81.8 L423.8,81.6 L425.3,81.5 L426.9,81.4"/></g>
<g font-family="Liberation Sans" font-weight="bold" font-style="italic" fill="#ffff00" font-size="11.2">
<text x="431" y="84">100 NMI</text>
<text x="434" y="269">50 NMI</text>
</g>
<rect x="873.5" y="87.5" width="20" height="714" fill="#000" stroke="#8c8c8c" stroke-width="1"/>
<defs>
<linearGradient id="g1" x1="0" y1="0" x2="0" y2="1"><stop offset="0" stop-color="#808080"/><stop offset="1" stop-color="#ffffff"/></linearGradient>
<linearGradient id="g2" x1="0" y1="0" x2="0" y2="1"><stop offset="0" stop-color="#800080"/><stop offset="1" stop-color="#ff00ff"/></linearGradient>
<linearGradient id="g3" x1="0" y1="0" x2="0" y2="1"><stop offset="0" stop-color="#780000"/><stop offset="1" stop-color="#ee0000"/></linearGradient>
<linearGradient id="g4" x1="0" y1="0" x2="0" y2="1"><stop offset="0" stop-color="#783e00"/><stop offset="1" stop-color="#ff8000"/></linearGradient>
<linearGradient id="g5" x1="0" y1="0" x2="0" y2="1"><stop offset="0" stop-color="#a07800"/><stop offset="1" stop-color="#ffff00"/></linearGradient>
<linearGradient id="g6" x1="0" y1="0" x2="0" y2="1"><stop offset="0" stop-color="#007860"/><stop offset="1" stop-color="#00ffc0"/></linearGradient>
<linearGradient id="g7" x1="0" y1="0" x2="0" y2="1"><stop offset="0" stop-color="#003c80"/><stop offset="1" stop-color="#00c8ff"/></linearGradient>
</defs>
<rect x="875" y="89" width="17" height="91" fill="url(#g1)"/>
<rect x="875" y="180" width="17" height="89" fill="url(#g2)"/>
<rect x="875" y="269" width="17" height="89" fill="url(#g3)"/>
<rect x="875" y="358" width="17" height="89" fill="url(#g4)"/>
<rect x="875" y="447" width="17" height="90" fill="url(#g5)"/>
<rect x="875" y="537" width="17" height="89" fill="url(#g6)"/>
<rect x="875" y="626" width="17" height="89" fill="url(#g7)"/>
<g stroke="#ffff00" stroke-width="1" fill="none">
<path d="M888.5,15 V6.5 H895"/>
<path d="M894.5,6.5 L889.5,11 L894,14"/>
<path d="M892,15 H895 V12 Z" fill="#ffff00" stroke="none"/>
</g>
<g font-family="Liberation Mono" fill="#ffff00">
<text transform="translate(715,15) scale(1,1.12)" font-size="11.3" letter-spacing="0.22">NEXLAB-College of DuPage</text>
<text x="863" y="64" font-size="13.33">NIDS</text>
<text x="815" y="74" font-size="12.5" letter-spacing="0.4">[kg/m2]</text>
<text x="867" y="785.0" font-size="13.33" text-anchor="end">0</text>
<text x="867" y="744.0" font-size="13.33" text-anchor="end">5</text>
<text x="867" y="703.0" font-size="13.33" text-anchor="end">10</text>
<text x="867" y="662.0" font-size="13.33" text-anchor="end">15</text>
<text x="867" y="621.0" font-size="13.33" text-anchor="end">20</text>
<text x="867" y="580.0" font-size="13.33" text-anchor="end">25</text>
<text x="867" y="539.0" font-size="13.33" text-anchor="end">30</text>
<text x="867" y="498.0" font-size="13.33" text-anchor="end">35</text>
<text x="867" y="457.0" font-size="13.33" text-anchor="end">40</text>
<text x="867" y="416.0" font-size="13.33" text-anchor="end">45</text>
<text x="867" y="375.0" font-size="13.33" text-anchor="end">50</text>
<text x="867" y="334.0" font-size="13.33" text-anchor="end">55</text>
<text x="867" y="293.0" font-size="13.33" text-anchor="end">60</text>
<text x="867" y="252.0" font-size="13.33" text-anchor="end">65</text>
<text x="867" y="211.0" font-size="13.33" text-anchor="end">70</text>
<text x="867" y="170.0" font-size="13.33" text-anchor="end">75</text>
<text x="867" y="129.0" font-size="13.33" text-anchor="end">80</text>
</g>
<text transform="translate(161.8,897) scale(1,1.12)" font-family="Liberation Mono" font-size="11.3" letter-spacing="2.26" fill="#ffffff">DIGITAL VERTICALLY INTEGRATED LIQUID (VIL) - KAEC 9 JAN 26 18:47</text>
</svg>
</body></html>
